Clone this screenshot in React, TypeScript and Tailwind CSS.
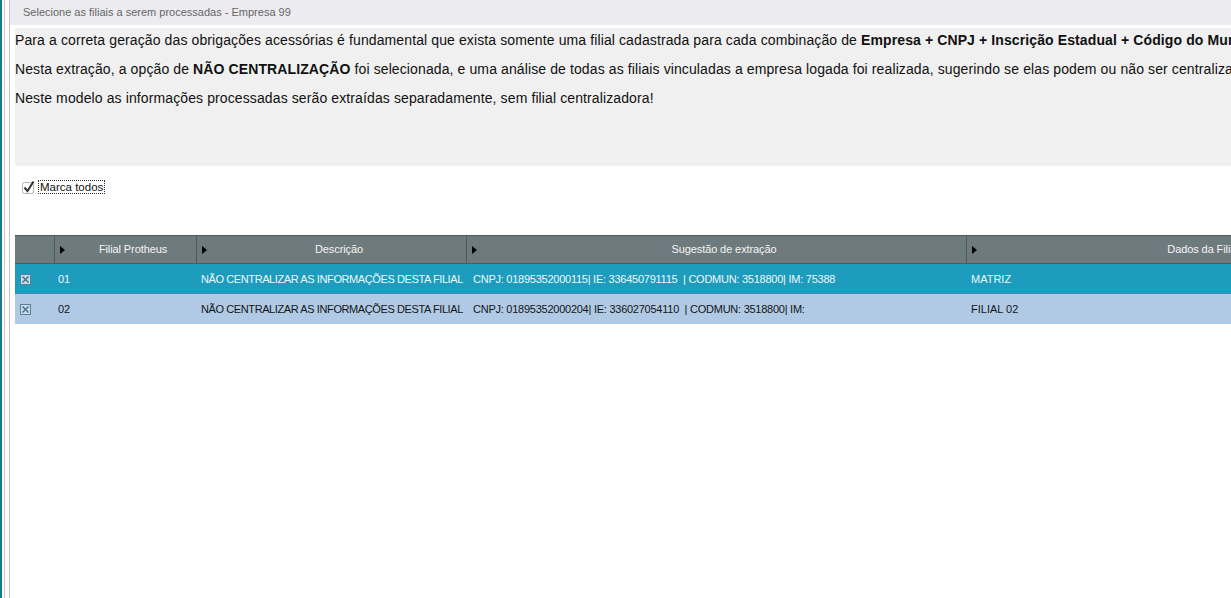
import React from "react";

const font = { fontFamily: '"Liberation Sans", Arial, sans-serif' };

type Row = {
  filial: string;
  descricao: string;
  sugestao: string;
  dados: string;
};

const rows: Row[] = [
  {
    filial: "01",
    descricao: "NÃO CENTRALIZAR AS INFORMAÇÕES DESTA FILIAL",
    sugestao: "CNPJ: 01895352000115| IE: 336450791115  | CODMUN: 3518800| IM: 75388",
    dados: "MATRIZ",
  },
  {
    filial: "02",
    descricao: "NÃO CENTRALIZAR AS INFORMAÇÕES DESTA FILIAL",
    sugestao: "CNPJ: 01895352000204| IE: 336027054110  | CODMUN: 3518800| IM:",
    dados: "FILIAL 02",
  },
];

const columns = [
  { label: "Filial Protheus", width: "w-[142px]" },
  { label: "Descrição", width: "w-[270px]" },
  { label: "Sugestão de extração", width: "w-[500px]" },
  { label: "Dados da Filial", width: "w-[458px]" },
];

function MarkIcon() {
  return (
    <svg width="11" height="11" viewBox="0 0 11 11">
      <rect x="0.5" y="0.5" width="10" height="10" fill="#c9dbe6" stroke="#5a8198" />
      <path d="M2.5 2.5l6 6M8.5 2.5l-6 6" stroke="#3f6f8a" strokeWidth="1.4" />
    </svg>
  );
}

function CheckAll() {
  return (
    <svg width="15" height="15" viewBox="0 0 15 15">
      <rect x="1.5" y="2.5" width="11" height="11" rx="2" fill="#fff" stroke="#b5b5b5" />
      <path d="M3.5 7.5l3 3.5L12.5 1.5" fill="none" stroke="#333" strokeWidth="2" />
    </svg>
  );
}

function Triangle() {
  return (
    <svg width="5" height="8" viewBox="0 0 5 8" className="shrink-0">
      <path d="M0 0l5 4-5 4z" fill="#000" />
    </svg>
  );
}

export default function App() {
  return (
    <div className="flex h-[598px] w-[1231px] overflow-hidden bg-white" style={font}>
      <div className="w-[2px] shrink-0 bg-[#17798f]" />
      <div className="w-[2px] shrink-0" />
      <div className="w-px shrink-0 bg-[#cfcfcf]" />
      <div className="w-[4px] shrink-0" />
      <div className="w-px shrink-0 bg-[#c4c4c4]" />

      <div className="min-w-0 flex-1">
        <div className="flex h-[25px] items-center whitespace-nowrap bg-[#ececf0] pl-[13px] text-[11px] text-[#666]">
          Selecione as filiais a serem processadas - Empresa 99
        </div>

        <div className="pl-[5px]">
          <div className="mt-[3px] h-[138px] whitespace-nowrap bg-[#f0f0f0] pt-[4px] text-[14px] tracking-[0.11px] text-[#111]">
            <p className="mb-[13px] leading-[16px]">
              Para a correta geração das obrigações acessórias é fundamental que exista somente uma filial cadastrada para cada combinação de{" "}
              <b>Empresa + CNPJ + Inscrição Estadual + Código do Município</b>
            </p>
            <p className="mb-[13px] leading-[16px]">
              Nesta extração, a opção de <b>NÃO CENTRALIZAÇÃO</b> foi selecionada, e uma análise de todas as filiais vinculadas a empresa logada foi realizada, sugerindo se elas podem ou não ser centralizadas.
            </p>
            <p className="leading-[16px]">
              Neste modelo as informações processadas serão extraídas separadamente, sem filial centralizadora!
            </p>
          </div>

          <div className="flex h-[69px] items-start pl-[6px] pt-[14px]">
            <CheckAll />
            <span className="ml-[2px] border border-dotted border-[#333] px-px text-[11.5px] leading-[12px] text-[#111]">
              Marca todos
            </span>
          </div>

          <div className="w-max whitespace-nowrap text-[11px]">
            <div className="flex h-[29px] border-t border-b border-[#4f585b] bg-[#6e7b7e] text-[#f4f4f4]">
              <div className="w-[40px] border-r border-[#4f585b]" />
              {columns.map((c) => (
                <div
                  key={c.label}
                  className={`${c.width} flex items-center border-r border-[#4f585b] pl-[5px]`}
                >
                  <Triangle />
                  <span className="flex-1 pl-[5px] text-center tracking-[-0.1px]">{c.label}</span>
                </div>
              ))}
            </div>
            {rows.map((r, i) => (
              <div
                key={r.filial}
                className={`flex h-[30px] items-center ${
                  i === 0 ? "bg-[#1d9cbd] text-[#eef8fc]" : "bg-[#b0cae5] text-[#151515]"
                }`}
              >
                <div className="flex w-[41px] pl-[5px]">
                  <MarkIcon />
                </div>
                <div className="w-[142px] pl-[2px]">{r.filial}</div>
                <div className="w-[270px] pl-[3px] tracking-[-0.4px]">{r.descricao}</div>
                <div className="w-[500px] whitespace-pre pl-[5px] tracking-[-0.25px]">{r.sugestao}</div>
                <div className="w-[458px] pl-[3px]">{r.dados}</div>
              </div>
            ))}
          </div>
        </div>
      </div>
    </div>
  );
}
